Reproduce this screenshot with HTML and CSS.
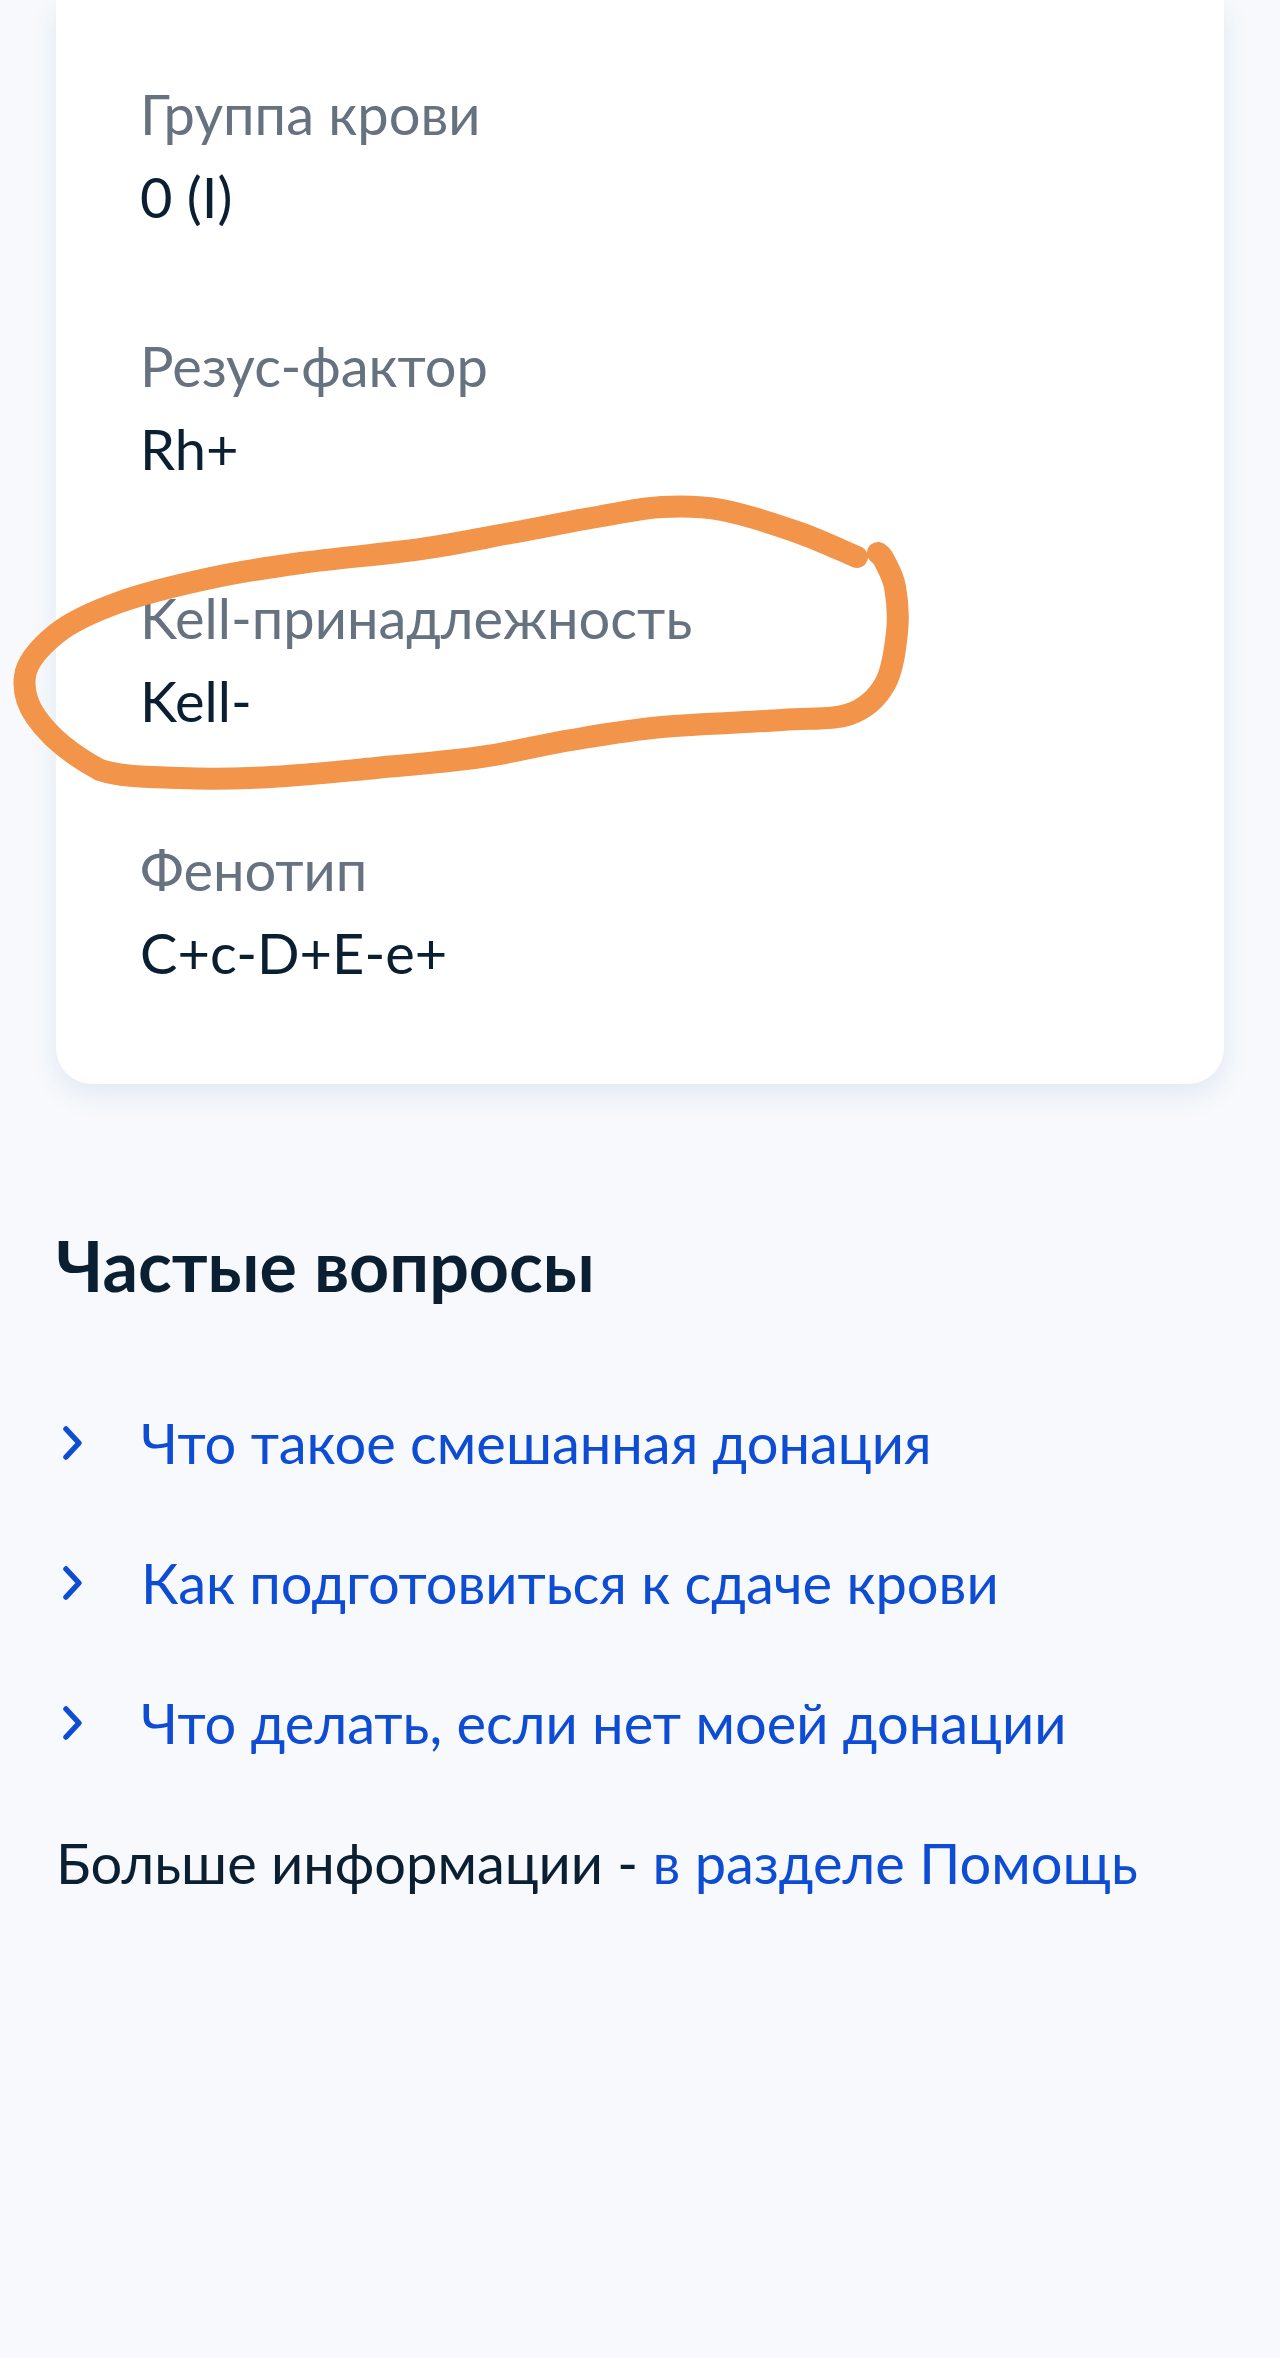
FILE: index.html
```html
<!DOCTYPE html>
<html lang="ru">
<head>
    <meta charset="UTF-8">
    <meta name="viewport" content="width=device-width, initial-scale=1.0">
    <title>Донорство крови</title>
    <link rel="stylesheet" href="styles.css">
</head>
<body>
    <div class="page">
        <div class="card">
            <div class="field">
                <div class="field-label">Группа крови</div>
                <div class="field-value">0 (I)</div>
            </div>
            <div class="field">
                <div class="field-label">Резус-фактор</div>
                <div class="field-value">Rh+</div>
            </div>
            <div class="field">
                <div class="field-label">Kell-принадлежность</div>
                <div class="field-value">Kell-</div>
            </div>
            <div class="field">
                <div class="field-label">Фенотип</div>
                <div class="field-value">C+c-D+E-e+</div>
            </div>
        </div>

        <h2 class="faq-title">Частые вопросы</h2>
        <div class="faq-list">
            <a class="faq-item" href="#">
                <svg class="chevron" width="28" height="40" viewBox="0 0 28 40"><path d="M10 6 L23 20 L10 34" /></svg>
                <span>Что такое смешанная донация</span>
            </a>
            <a class="faq-item" href="#">
                <svg class="chevron" width="28" height="40" viewBox="0 0 28 40"><path d="M10 6 L23 20 L10 34" /></svg>
                <span>Как подготовиться к сдаче крови</span>
            </a>
            <a class="faq-item" href="#">
                <svg class="chevron" width="28" height="40" viewBox="0 0 28 40"><path d="M10 6 L23 20 L10 34" /></svg>
                <span>Что делать, если нет моей донации</span>
            </a>
        </div>
        <div class="more-info">Больше информации - <a href="#">в разделе Помощь</a></div>
    </div>

    <!-- hand-drawn marker circle over the Kell row -->
    <svg class="marker" width="1280" height="820" viewBox="0 0 1280 820">
        <path d="M857 557 C847 553 819.5 539.8 797 532 C774.5 524.2 744.5 514.2 722 510 C699.5 505.8 682 506 662 507 C642 508 627.2 511.7 602 516 C576.8 520.3 541.2 527.5 511 533 C480.8 538.5 456 544 421 549 C386 554 336 558.2 301 563 C266 567.8 241.2 571.5 211 578 C180.8 584.5 145.2 593 120 602 C94.8 611 72 621 56 634 C40 647 27 662 25 676 C23 690 27 704 36 717 C45 730 62.7 750 100 770 C121.7 777.2 151.5 776.8 180 778 C208.5 779.2 238.3 778.7 271 777 C303.7 775.3 341 771.3 376 768 C411 764.7 448.5 761.7 481 757 C513.5 752.3 540.8 745 571 740 C601.2 735 626.8 730.3 662 727 C697.2 723.7 750.7 722.2 782 720 C813.3 717.8 832.8 720 850 714 C867.2 708 877.2 697.7 885 684 C892.8 670.3 895.3 648.2 897 632 C898.7 615.8 897.2 599 895 587 C892.8 575 886.8 565.7 884 560 C881.2 554.3 879 554.2 878 553" />
    </svg>
</body>
</html>
```

FILE: styles.css
```css
html {
    background-color: #f7f9fc;
}
body {
    margin: 0;
    padding: 0;
    font-family: Lato, "Liberation Sans", sans-serif;
    color: #0b1f33;
    position: relative;
    min-height: 2358px;
}
.page {
    padding: 0 56px;
}
.card {
    background-color: #fff;
    border-radius: 0 0 36px 36px;
    padding: 72px 84px 90px;
    box-shadow: 0 10px 28px rgba(40, 85, 170, 0.1);
}
.field + .field {
    margin-top: 86px;
}
.field-label,
.field-value {
    font-size: 56px;
    line-height: 83px;
}
.field-label {
    color: #66727f;
}
.field-value {
    color: #0b1f33;
}
.faq-title {
    margin: 131px 0 0;
    font-size: 70px;
    line-height: 101px;
    font-weight: 700;
    color: #0b1f33;
}
.faq-list {
    margin-top: 85px;
    display: flex;
    flex-direction: column;
    gap: 57px;
}
.faq-item {
    display: flex;
    align-items: center;
    font-size: 56px;
    line-height: 83px;
    color: #0d4cd3;
    text-decoration: none;
}
.chevron {
    flex: none;
    margin-right: 57px;
}
.chevron path {
    fill: none;
    stroke: #0d4cd3;
    stroke-width: 5.5;
    stroke-linecap: round;
    stroke-linejoin: round;
}
.more-info {
    margin-top: 57px;
    font-size: 56px;
    line-height: 83px;
    color: #0b1f33;
}
.more-info a {
    color: #0d4cd3;
    text-decoration: none;
}
.marker {
    position: absolute;
    top: 0;
    left: 0;
    pointer-events: none;
}
.marker path {
    fill: none;
    stroke: #f2944a;
    stroke-width: 22;
    stroke-linecap: round;
    stroke-linejoin: round;
}
```
